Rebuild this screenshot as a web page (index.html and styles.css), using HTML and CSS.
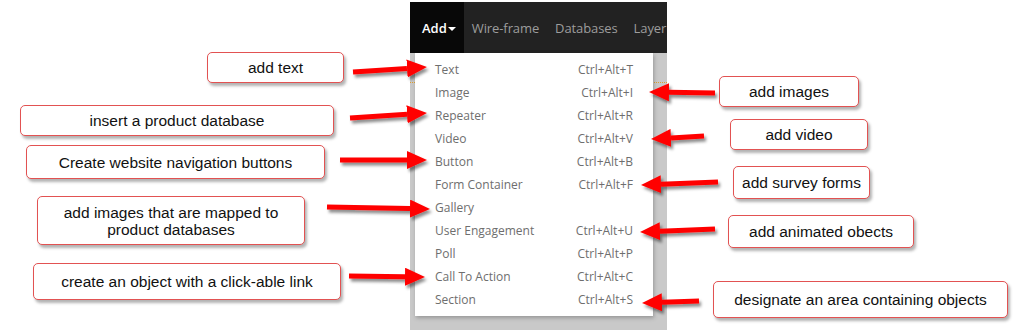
FILE: index.html
```html
<html lang="en">
<head>
    <meta charset="UTF-8">
    <title>add menu</title>
    <link rel="stylesheet" href="styles.css">
</head>
<body>
    <main class="canvas">
        <!-- the app screenshot part -->
        <section class="app">
            <nav class="nav">
                <span class="nav_item active">Add<i class="caret"></i></span>
                <span class="nav_item">Wire-frame</span>
                <span class="nav_item">Databases</span>
                <span class="nav_item">Layer</span>
            </nav>
            <div class="drop">
                <ul class="menu">
                    <li><span>Text</span><span>Ctrl+Alt+T</span></li>
                    <li><span>Image</span><span>Ctrl+Alt+I</span></li>
                    <li><span>Repeater</span><span>Ctrl+Alt+R</span></li>
                    <li><span>Video</span><span>Ctrl+Alt+V</span></li>
                    <li><span>Button</span><span>Ctrl+Alt+B</span></li>
                    <li><span>Form Container</span><span>Ctrl+Alt+F</span></li>
                    <li><span>Gallery</span><span></span></li>
                    <li><span>User Engagement</span><span>Ctrl+Alt+U</span></li>
                    <li><span>Poll</span><span>Ctrl+Alt+P</span></li>
                    <li><span>Call To Action</span><span>Ctrl+Alt+C</span></li>
                    <li><span>Section</span><span>Ctrl+Alt+S</span></li>
                </ul>
            </div>
        </section>

        <!-- callouts -->
        <div class="note" style="left:207px;top:52px;width:137px;height:31px">add text</div>
        <div class="note" style="left:20px;top:105px;width:314px;height:31px">insert a product database</div>
        <div class="note" style="left:26px;top:145px;width:299px;height:34px">Create website navigation buttons</div>
        <div class="note" style="left:37px;top:196px;width:268px;height:49px">add images that are mapped to<br>product databases</div>
        <div class="note" style="left:33px;top:263px;width:308px;height:37px">create an object with a click-able link</div>

        <div class="note" style="left:719px;top:76px;width:140px;height:31px">add images</div>
        <div class="note" style="left:730px;top:119px;width:138px;height:31px">add video</div>
        <div class="note" style="left:733px;top:166px;width:137px;height:33px">add survey forms</div>
        <div class="note" style="left:728px;top:215px;width:186px;height:33px">add animated obects</div>
        <div class="note" style="left:713px;top:281px;width:295px;height:37px">designate an area containing objects</div>

        <!-- arrows -->
        <svg class="arrows" width="1030" height="333" viewBox="0 0 1030 333">
            <defs>
                <filter id="shade" x="-20%" y="-50%" width="140%" height="200%">
                    <feDropShadow dx="2" dy="3" stdDeviation="1.5" flood-color="#000" flood-opacity="0.45"/>
                </filter>
                <marker id="head" viewBox="0 0 20 18" markerWidth="20" markerHeight="18" refX="0" refY="9" orient="auto" markerUnits="userSpaceOnUse">
                    <polygon points="0,0 20,9 0,18" fill="#ff0000"/>
                </marker>
            </defs>
            <g stroke="#ff0000" stroke-width="5" filter="url(#shade)" marker-end="url(#head)">
                <line x1="353" y1="72" x2="407" y2="68.4"/>
                <line x1="350" y1="118" x2="407" y2="114.3"/>
                <line x1="340" y1="160" x2="407" y2="160"/>
                <line x1="327" y1="207" x2="410" y2="208.6"/>
                <line x1="349" y1="276" x2="405" y2="276.7"/>
                <line x1="715" y1="93" x2="669" y2="92.3"/>
                <line x1="704" y1="136" x2="671" y2="137.9"/>
                <line x1="718" y1="182" x2="661" y2="184.2"/>
                <line x1="715" y1="229" x2="660" y2="231.2"/>
                <line x1="699" y1="301" x2="662" y2="302.3"/>
            </g>
        </svg>
    </main>
</body>
</html>
```

FILE: styles.css
```css
body, ul, li {
    margin: 0;
    padding: 0;
}
body {
    background-color: #ffffff;
    font-family: "Liberation Sans", Arial, sans-serif;
}
.canvas {
    position: relative;
    width: 1030px;
    height: 333px;
    overflow: hidden;
}
.app {
    position: absolute;
    left: 410px;
    top: 2px;
    width: 257px;
    font-family: "Open Sans", sans-serif;
}
.nav {
    display: flex;
    height: 51px;
    background-color: #222222;
    overflow: hidden;
    white-space: nowrap;
}
.nav_item {
    display: flex;
    align-items: center;
    padding: 0 8px;
    font-size: 13px;
    letter-spacing: -0.1px;
    color: #9d9d9d;
}
.nav_item.active {
    background-color: #080808;
    color: #ffffff;
    font-weight: 600;
    padding: 0 8px 0 12px;
    letter-spacing: 0;
}
.caret {
    width: 0;
    height: 0;
    margin-left: 1px;
    margin-top: 2px;
    border-left: 4px solid transparent;
    border-right: 4px solid transparent;
    border-top: 4px solid #ffffff;
}
.drop {
    position: relative;
    height: 277px;
    padding: 0 14px 0 5px;
    background-color: #c9c9c9;
    box-sizing: border-box;
}
/* orange dotted guide showing in the gutter */
.drop::before {
    content: "";
    position: absolute;
    top: 29px;
    left: 0;
    right: 0;
    border-top: 1px dotted #e0a030;
}
.menu {
    position: relative;
    list-style: none;
    width: 238px;
    height: 263px;
    padding: 5px 0;
    box-sizing: border-box;
    background-color: #ffffff;
    box-shadow: 1px 2px 4px rgba(0, 0, 0, 0.25);
}
.menu li {
    display: flex;
    justify-content: space-between;
    align-items: center;
    height: 23px;
    padding: 0 20px;
    font-size: 12px;
    color: #6e6e6e;
}
.note {
    position: absolute;
    display: flex;
    align-items: center;
    justify-content: center;
    box-sizing: border-box;
    background-color: #ffffff;
    border: 1.5px solid #e25252;
    border-radius: 5px;
    box-shadow: 2px 3px 3px rgba(0, 0, 0, 0.3);
    font-size: 15.5px;
    line-height: 17px;
    color: #111111;
    text-align: center;
}
.arrows {
    position: absolute;
    left: 0;
    top: 0;
}
```
